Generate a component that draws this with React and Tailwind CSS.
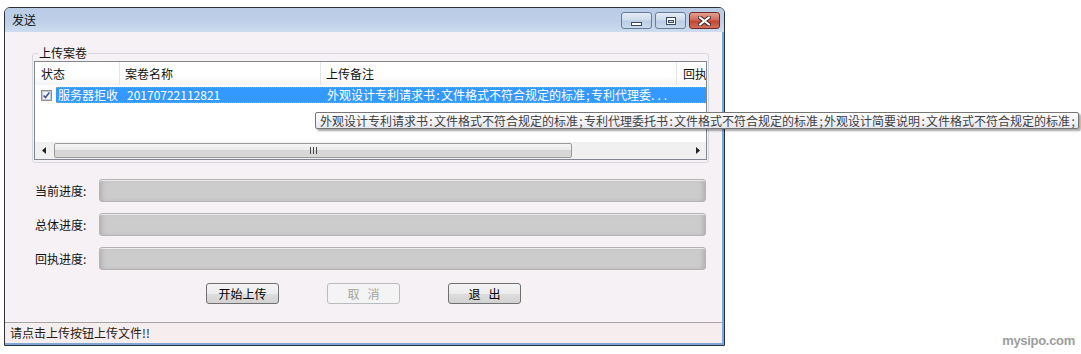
import React from 'react'

const note = '外观设计专利请求书:文件格式不符合规定的标准;专利代理委托书:文件格式不符合规定的标准;外观设计简要说明:文件格式不符合规定的标准;'

// half-width punctuation gets a fixed 6px cell, like the bitmap font in the shot
function Mixed({ text }) {
  return text.split(/([:;])/).map((part, i) =>
    part === ':' || part === ';' ? (
      <span key={i} className="inline-block w-[6px] text-center">{part}</span>
    ) : (
      <span key={i}>{part}</span>
    )
  )
}

function CaptionButton({ kind }) {
  if (kind === 'close') {
    return (
      <div className="w-[31px] h-[17px] rounded-[3px] border border-[#6b2b24] bg-[linear-gradient(#e4a293,#d46a58_45%,#c24532_55%,#d0705d)] flex items-center justify-center">
        <svg width="13" height="10" viewBox="0 0 13 10">
          <path d="M2 1.5 L11 8.5 M11 1.5 L2 8.5" stroke="#3d2a2a" strokeWidth="4" strokeLinecap="square" />
          <path d="M2 1.5 L11 8.5 M11 1.5 L2 8.5" stroke="#ffffff" strokeWidth="2" strokeLinecap="square" />
        </svg>
      </div>
    )
  }
  return (
    <div className="w-[31px] h-[17px] rounded-[3px] border border-[#6a7d98] bg-[linear-gradient(#e4ecf6,#cfdbec_45%,#bccde5_55%,#cbd9ec)] flex items-center justify-center">
      {kind === 'min' ? (
        <span className="mt-[6px] w-[11px] h-[4px] border border-[#3a4a62] bg-white" />
      ) : (
        <span className="w-[10px] h-[8px] border border-[#3a4a62] bg-white flex items-center justify-center">
          <span className="w-[6px] h-[3px] mt-[1px] border border-[#3a4a62] bg-[#c9d6e8]" />
        </span>
      )}
    </div>
  )
}

function ProgressRow({ label }) {
  return (
    <div className="flex items-center h-[23px]">
      <span className="w-[67px] pl-[3px] text-[12px] text-[#111]">{label}</span>
      <div className="w-[607px] h-[23px] rounded-[3px] border border-[#b3b3b3] bg-[#cccccc] shadow-[inset_0_1px_0_#ebebeb,inset_4px_0_4px_-2px_#b1b1b1,inset_-4px_0_4px_-2px_#b1b1b1]" />
    </div>
  )
}

function Btn({ children, disabled }) {
  return (
    <div
      className={
        disabled
          ? 'w-[73px] h-[21px] rounded-[3px] border border-[#b9bcbf] bg-[#f4f4f4] text-[#a3a3a3] flex items-center justify-center text-[12px]'
          : 'w-[73px] h-[21px] rounded-[3px] border border-[#707070] bg-[linear-gradient(#f4f4f4,#ececec_50%,#dedede_50%,#d2d2d2)] text-black flex items-center justify-center text-[12px]'
      }
    >
      {children}
    </div>
  )
}

function Checkbox() {
  return (
    <svg width="11" height="11" viewBox="0 0 11 11">
      <rect x="0.5" y="0.5" width="10" height="10" fill="#e6e9ee" stroke="#8e9197" />
      <rect x="1.5" y="1.5" width="8" height="8" fill="#f4f5f8" stroke="#c4c9d2" />
      <path d="M2.6 5.4 L4.5 7.6 L8.4 2.6" fill="none" stroke="#3f5693" strokeWidth="1.6" />
    </svg>
  )
}

export default function App() {
  return (
    <div className="relative w-[1081px] h-[354px] bg-white overflow-hidden pt-[7px] pl-[4px] font-['Noto_Sans_CJK_SC',sans-serif] text-[12px] leading-none text-black">
      <div className="w-[721px] h-[339px] flex flex-col border border-[#2c323c] rounded-t-[6px] overflow-hidden">
        {/* title bar */}
        <div className="h-[24px] shrink-0 flex items-start justify-between pl-[7px] pr-[4px] pt-[4px] bg-[linear-gradient(#b9cce6,#bfd1e9_60%,#cddcef)]">
          <span className="mt-[2px] text-[12px] text-[#111]">发送</span>
          <div className="flex gap-[3px]">
            <CaptionButton kind="min" />
            <CaptionButton kind="max" />
            <CaptionButton kind="close" />
          </div>
        </div>

        {/* client */}
        <div className="flex-1 flex flex-col bg-[#f5f1f5] border-r-2 border-b-2 border-[#7ea7d8]">
          <div className="pl-[27px] pt-[13px]">
            <fieldset className="w-[677px] border border-[#d3d8e0] rounded-[3px] px-[1px] pb-[2px]">
              <legend className="ml-[4px] px-[1px] leading-[16px] text-[12px] text-[#111]">上传案卷</legend>
              <div className="w-[673px] h-[99px] border border-[#828790] bg-white flex flex-col overflow-hidden">
                {/* header */}
                <div className="h-[23px] shrink-0 flex bg-[linear-gradient(#ffffff,#ffffff_60%,#f3f4f6)] text-[#111]">
                  <div className="w-[85px] pl-[6px] flex items-center border-r border-[#e3e5e8]">状态</div>
                  <div className="w-[201px] pl-[5px] flex items-center border-r border-[#e3e5e8]">案卷名称</div>
                  <div className="w-[356px] pl-[5px] flex items-center border-r border-[#e3e5e8]">上传备注</div>
                  <div className="flex-1 pl-[6px] flex items-center overflow-hidden whitespace-nowrap">回执</div>
                </div>
                {/* row */}
                <div className="mt-[2px] h-[16px] shrink-0 flex items-center">
                  <div className="w-[21px] pl-[6px] flex items-center">
                    <Checkbox />
                  </div>
                  <div className="flex-1 h-[16px] flex items-center bg-[#3399ff] text-white border-y border-dotted border-[#e39a4a] whitespace-nowrap overflow-hidden">
                    <span className="w-[65px] pl-[2px]">服务器拒收</span>
                    <span className="w-[200px] pl-[6px]">20170722112821</span>
                    <span className="pl-[6px]">
                      <Mixed text="外观设计专利请求书:文件格式不符合规定的标准;专利代理委" />
                      <span className="tracking-[3px]">...</span>
                    </span>
                  </div>
                </div>
                <div className="flex-1" />
                {/* horizontal scrollbar */}
                <div className="h-[17px] shrink-0 flex items-center bg-[#f0f0f0]">
                  <div className="w-[17px] h-[17px] flex items-center justify-center">
                    <svg width="4" height="7" viewBox="0 0 4 7"><path d="M4 0 L0 3.5 L4 7 Z" fill="#222" /></svg>
                  </div>
                  <div className="flex-1 h-[17px] flex items-center pl-[2px]">
                    <div className="w-[518px] h-[15px] rounded-[2px] border border-[#9a9a9a] bg-[linear-gradient(#f6f6f6,#e8e8e8_50%,#d6d6d6_50%,#d9d9d9)] flex items-center justify-center">
                      <svg width="7" height="7" viewBox="0 0 7 7">
                        <path d="M0.5 0 V7 M3.5 0 V7 M6.5 0 V7" stroke="#4a4a4a" strokeWidth="1" />
                      </svg>
                    </div>
                  </div>
                  <div className="w-[17px] h-[17px] flex items-center justify-center">
                    <svg width="4" height="7" viewBox="0 0 4 7"><path d="M0 0 L4 3.5 L0 7 Z" fill="#222" /></svg>
                  </div>
                </div>
              </div>
            </fieldset>
          </div>

          {/* progress */}
          <div className="pl-[27px] mt-[16px] flex flex-col gap-[11px]">
            <ProgressRow label="当前进度:" />
            <ProgressRow label="总体进度:" />
            <ProgressRow label="回执进度:" />
          </div>

          {/* buttons */}
          <div className="pl-[201px] mt-[13px] flex gap-[48px]">
            <Btn>开始上传</Btn>
            <Btn disabled>取&nbsp;&nbsp;&nbsp;消</Btn>
            <Btn>退&nbsp;&nbsp;&nbsp;出</Btn>
          </div>

          {/* status bar */}
          <div className="mt-auto h-[21px] flex items-center pl-[5px] border-t border-[#a7a4a7] bg-[#f6eeee] text-[#2a1a0e]">
            请点击上传按钮上传文件!!
          </div>
        </div>
      </div>

      {/* tooltip */}
      <div className="absolute left-[315px] top-[112px] w-[764px] h-[17px] flex items-center pl-[4px] rounded-[2px] border border-[#767676] bg-[linear-gradient(#ffffff,#e6e7f0)] shadow-[2px_2px_2px_rgba(0,0,0,0.35)] text-[#404040] whitespace-nowrap overflow-hidden">
        <Mixed text={note} />
      </div>

      {/* watermark */}
      <div className="absolute right-[6px] top-[334px] font-['Liberation_Sans',sans-serif] font-bold text-[13px] text-[#9d9d9d] tracking-[-0.3px]">
        mysipo.com
      </div>
    </div>
  )
}
